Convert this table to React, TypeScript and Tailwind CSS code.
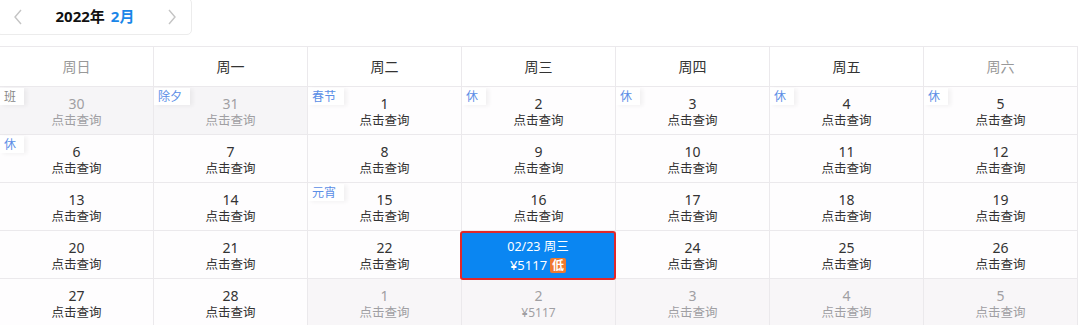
import React from "react";

type Day = {
	d: number;
	tag?: string;
	muted?: boolean;
	shade?: "past" | "next";
	price?: string;
	selected?: boolean;
};

const weekdays = ["周日", "周一", "周二", "周三", "周四", "周五", "周六"];

const rows: Day[][] = [
	[
		{ d: 30, tag: "班", muted: true, shade: "past" },
		{ d: 31, tag: "除夕", muted: true, shade: "past" },
		{ d: 1, tag: "春节" },
		{ d: 2, tag: "休" },
		{ d: 3, tag: "休" },
		{ d: 4, tag: "休" },
		{ d: 5, tag: "休" },
	],
	[{ d: 6, tag: "休" }, { d: 7 }, { d: 8 }, { d: 9 }, { d: 10 }, { d: 11 }, { d: 12 }],
	[{ d: 13 }, { d: 14 }, { d: 15, tag: "元宵" }, { d: 16 }, { d: 17 }, { d: 18 }, { d: 19 }],
	[{ d: 20 }, { d: 21 }, { d: 22 }, { d: 23, selected: true }, { d: 24 }, { d: 25 }, { d: 26 }],
	[
		{ d: 27 },
		{ d: 28 },
		{ d: 1, muted: true, shade: "next" },
		{ d: 2, muted: true, shade: "next", price: "¥5117" },
		{ d: 3, muted: true, shade: "next" },
		{ d: 4, muted: true, shade: "next" },
		{ d: 5, muted: true, shade: "next" },
	],
];

const Chevron = ({ dir }: { dir: "left" | "right" }) => (
	<svg width="10" height="16" viewBox="0 0 10 16" fill="none" stroke="#c4c4c4" strokeWidth={1.4}>
		<path d={dir === "left" ? "M8 1L2 8l6 7" : "M2 1l6 7-6 7"} />
	</svg>
);

const Cell = ({ day }: { day: Day }) => {
	const bg = day.shade === "past" ? "bg-[#f6f5f7]" : day.shade === "next" ? "bg-[#f8f6f8]" : "bg-[#fefdfe]";
	return (
		<div className={`relative h-[48px] border-r border-b border-[#ebe9ec] ${bg}`}>
			{day.tag && (
				<span
					className={`absolute left-0 top-[1px] bg-white pl-[4px] pr-[8px] text-[12px] leading-[17px] shadow-[3px_1px_4px_rgba(0,0,0,0.05)] ${
						day.tag === "班" ? "text-[#888]" : "text-[#5b8ee6]"
					}`}
				>
					{day.tag}
				</span>
			)}
			{day.selected ? (
				// selected day spills over the grid lines a little
				<div className="absolute -left-[2px] -right-[1px] top-0 -bottom-[2px] z-10 flex flex-col items-center rounded-[3px] border-2 border-[#e0282a] bg-[#0a86f2] pt-[5px] leading-[18px] text-white">
					<span className="text-[12.5px]">02/23 周三</span>
					<span className="flex items-center gap-[3px] text-[13px]">
						¥5117
						<span className="rounded-[2px] bg-[#f0792e] px-[2px] text-[12px] leading-[15px] font-bold">低</span>
					</span>
				</div>
			) : (
				<div
					className={`flex h-full flex-col items-center pt-[8px] leading-[17px] ${
						day.muted ? "text-[#a09fa3]" : "text-[#333]"
					}`}
				>
					<span className="text-[14px]">{day.d}</span>
					<span className={day.price ? "text-[12px]" : "text-[12.5px]"}>{day.price ?? "点击查询"}</span>
				</div>
			)}
		</div>
	);
};

export default function App() {
	return (
		<div
			className="h-[325px] w-[1080px] overflow-hidden bg-white"
			style={{ fontFamily: '"Noto Sans", "Noto Sans CJK SC", sans-serif' }}
		>
			<div className="-ml-[4px] -mt-[2px] flex h-[37px] w-[196px] items-center justify-between rounded-[5px] border border-[#ececec] pl-[16px] pr-[14px]">
				<Chevron dir="left" />
				<div className="flex items-center gap-[6px] text-[15px] font-bold">
					<span className="text-[#111]">2022年</span>
					<span className="text-[#1a86e8]">2月</span>
				</div>
				<Chevron dir="right" />
			</div>
			<div className="mt-[11px] grid w-[1078px] grid-cols-7 border-t border-[#ebe9ec]">
				{weekdays.map((w, i) => (
					<div
						key={w}
						className={`flex h-[40px] items-center justify-center border-r border-b border-[#ebe9ec] text-[14px] ${
							i === 0 || i === 6 ? "text-[#999]" : "text-[#333]"
						}`}
					>
						{w}
					</div>
				))}
				{rows.map((r, ri) => r.map((day, ci) => <Cell key={`${ri}-${ci}`} day={day} />))}
			</div>
		</div>
	);
}
